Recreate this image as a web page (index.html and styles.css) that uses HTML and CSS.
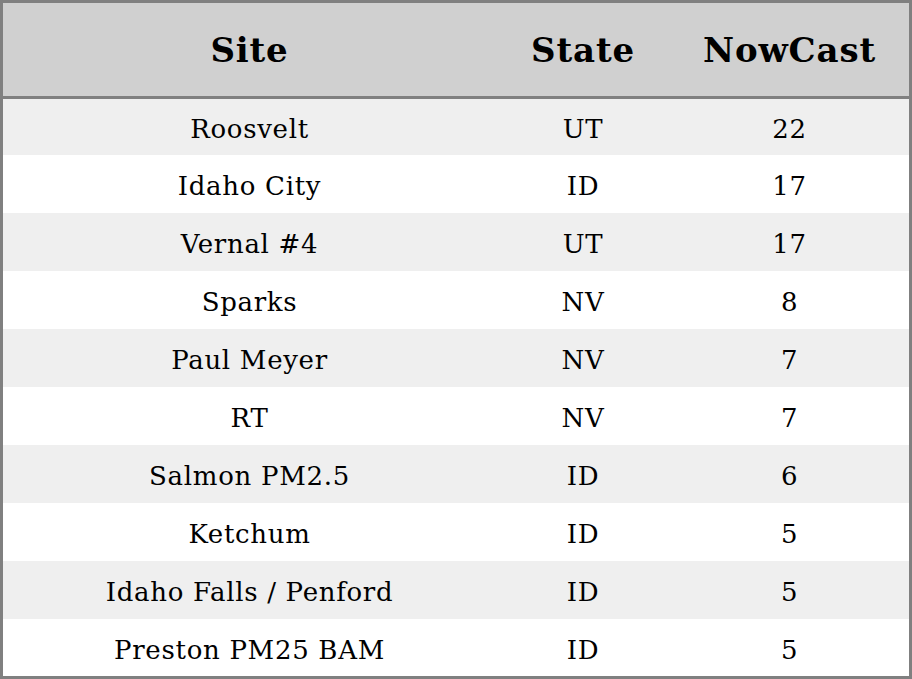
FILE: index.html
```html
<!DOCTYPE html>
<html>
<head>
<meta charset="utf-8">
<link rel="stylesheet" href="styles.css">
</head>
<body>
<table class="tbl">
  <colgroup>
    <col class="c-site"><col class="c-state"><col class="c-now">
  </colgroup>
  <thead>
    <tr><th>Site</th><th>State</th><th>NowCast</th></tr>
  </thead>
  <tbody>
    <tr><td>Roosvelt</td><td>UT</td><td>22</td></tr>
    <tr><td>Idaho City</td><td>ID</td><td>17</td></tr>
    <tr><td>Vernal #4</td><td>UT</td><td>17</td></tr>
    <tr><td>Sparks</td><td>NV</td><td>8</td></tr>
    <tr><td>Paul Meyer</td><td>NV</td><td>7</td></tr>
    <tr><td>RT</td><td>NV</td><td>7</td></tr>
    <tr><td>Salmon PM2.5</td><td>ID</td><td>6</td></tr>
    <tr><td>Ketchum</td><td>ID</td><td>5</td></tr>
    <tr><td>Idaho Falls / Penford</td><td>ID</td><td>5</td></tr>
    <tr><td>Preston PM25 BAM</td><td>ID</td><td>5</td></tr>
  </tbody>
</table>
</body>
</html>
```
FILE: styles.css
```css
html, body {
  margin: 0;
  padding: 0;
  background: #ffffff;
}
.tbl {
  width: 912px;
  border-collapse: separate;
  border-spacing: 0;
  border: 3px solid #808080;
  font-family: "DejaVu Serif", serif;
  color: #000;
  box-sizing: border-box;
}
.c-site { width: 493px; }
.c-state { width: 174px; }
.c-now { width: 239px; }
.tbl th {
  background: #d0d0d0;
  height: 93px;
  padding: 0;
  font-size: 34px;
  letter-spacing: 0.85px;
  font-weight: bold;
  text-align: center;
  border-bottom: 3px solid #808080;
  box-sizing: content-box;
}
.tbl tbody tr {
  height: 58px;
}
.tbl tbody tr:first-child {
  height: 56px;
}
.tbl tbody tr:last-child {
  height: 57px;
}
.tbl td {
  padding: 4px 0 0 0;
  font-size: 26px;
  letter-spacing: 0.7px;
  text-align: center;
  vertical-align: middle;
}
.tbl tbody tr:nth-child(odd) td {
  background: #efefef;
}
```
